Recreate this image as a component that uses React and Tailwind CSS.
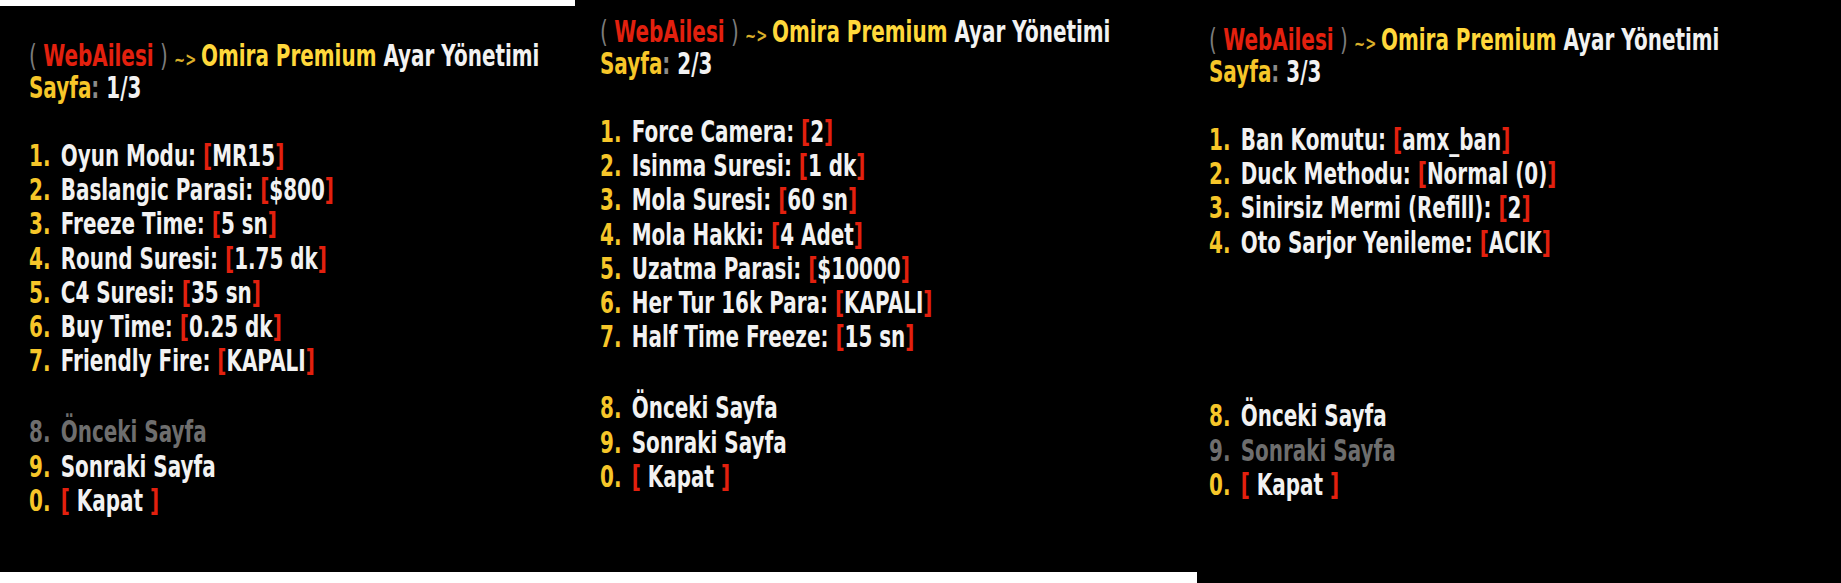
import React from 'react';

const YELLOW = 'text-[#f6c629]';
const RED = 'text-[#e3200e]';
const WHITE = 'text-[#f2f2f2]';
const GRAY = 'text-[#6e6e6e]';

const pages = [
  {
    page: '1/3',
    panel: 'w-[575px] mt-[6px] h-[566px] pl-[29px] pt-[34px]',
    items: [
      ['Oyun Modu', 'MR15'],
      ['Baslangic Parasi', '$800'],
      ['Freeze Time', '5 sn'],
      ['Round Suresi', '1.75 dk'],
      ['C4 Suresi', '35 sn'],
      ['Buy Time', '0.25 dk'],
      ['Friendly Fire', 'KAPALI'],
    ],
    prev: false,
    next: true,
  },
  {
    page: '2/3',
    panel: 'w-[622px] h-[572px] pl-[25px] pt-[16px]',
    items: [
      ['Force Camera', '2'],
      ['Isinma Suresi', '1 dk'],
      ['Mola Suresi', '60 sn'],
      ['Mola Hakki', '4 Adet'],
      ['Uzatma Parasi', '$10000'],
      ['Her Tur 16k Para', 'KAPALI'],
      ['Half Time Freeze', '15 sn'],
    ],
    prev: true,
    next: true,
  },
  {
    page: '3/3',
    panel: 'flex-1 h-[583px] pl-[12px] pt-[24px]',
    items: [
      ['Ban Komutu', 'amx_ban'],
      ['Duck Methodu', 'Normal (0)'],
      ['Sinirsiz Mermi (Refill)', '2'],
      ['Oto Sarjor Yenileme', 'ACIK'],
    ],
    prev: true,
    next: false,
  },
];

function NavItem({ num, label, enabled }) {
  if (!enabled) {
    return (
      <div className={`h-[34.2px] leading-[34.2px] ${GRAY}`}>
        {num}. <span className="ml-[5px]">{label}</span>
      </div>
    );
  }
  return (
    <div className="h-[34.2px] leading-[34.2px]">
      <span className={YELLOW}>{num}.</span> <span className={`ml-[5px] ${WHITE}`}>{label}</span>
    </div>
  );
}

function MenuPanel({ data }) {
  return (
    <div className={`bg-black ${data.panel}`}>
      <div className="origin-left scale-x-[0.665] whitespace-pre font-['DejaVu_Sans',sans-serif] font-bold text-[30px]">
        {/* title */}
        <div className="h-[31px] leading-[31px]">
          <span className="text-[#7c7c7c] font-normal">( </span>
          <span className={RED}>WebAilesi</span>
          <span className="text-[#7c7c7c] font-normal"> ) </span>
          <span className="text-[#d9ae2a] text-[20px]">~&gt; </span>
          <span className="text-[#ffd83b]">Omira Premium</span>
          <span className={WHITE}> Ayar Yönetimi</span>
        </div>
        <div className="h-[34px] leading-[34px]">
          <span className={YELLOW}>Sayfa</span>
          <span className="text-[#8a8a8a]">:</span>
          <span className={WHITE}> {data.page}</span>
        </div>

        {/* settings */}
        <div className="mt-[34px] h-[239.4px]">
          {data.items.map(([label, value], i) => (
            <div key={label} className="h-[34.2px] leading-[34.2px]">
              <span className={YELLOW}>{i + 1}.</span>{' '}
              <span className={`ml-[5px] ${WHITE}`}>{label}: </span>
              <span className={RED}>[</span>
              <span className={WHITE}>{value}</span>
              <span className={RED}>]</span>
            </div>
          ))}
        </div>

        {/* navigation */}
        <div className="mt-[37px]">
          <NavItem num="8" label="Önceki Sayfa" enabled={data.prev} />
          <NavItem num="9" label="Sonraki Sayfa" enabled={data.next} />
          <div className="h-[34.2px] leading-[34.2px]">
            <span className={YELLOW}>0.</span> <span className={`ml-[5px] ${RED}`}>[</span>
            <span className={WHITE}> Kapat </span>
            <span className={RED}>]</span>
          </div>
        </div>
      </div>
    </div>
  );
}

export default function App() {
  return (
    <div className="flex items-start w-[1841px] h-[583px] bg-white overflow-hidden">
      {pages.map((p) => (
        <MenuPanel key={p.page} data={p} />
      ))}
    </div>
  );
}
